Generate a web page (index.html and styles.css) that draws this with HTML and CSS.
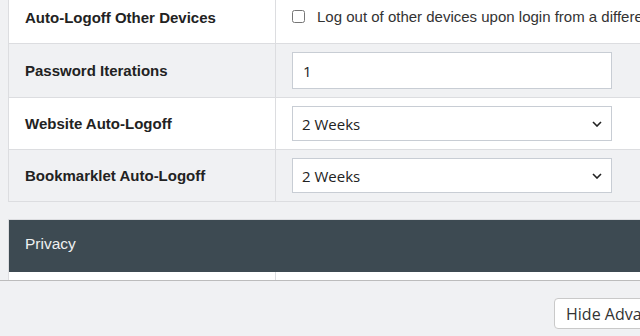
FILE: index.html
```html
<!DOCTYPE html>
<html lang="en">
<head>
    <meta charset="UTF-8">
    <meta name="viewport" content="width=device-width, initial-scale=1.0">
    <title>Advanced Settings</title>
    <link rel="stylesheet" href="styles.css">
</head>
<body>
    <div class="scroller">
        <table class="settings">
            <colgroup><col class="col-label"><col></colgroup>
            <tr>
                <th>Auto-Logoff Other Devices</th>
                <td>
                    <label class="check">
                        <input type="checkbox" id="logoutOthers">
                        <span>Log out of other devices upon login from a different device</span>
                    </label>
                </td>
            </tr>
            <tr class="alt">
                <th>Password Iterations</th>
                <td><input type="text" class="field" id="iterations" value="1" autofocus></td>
            </tr>
            <tr>
                <th>Website Auto-Logoff</th>
                <td>
                    <div class="select-wrap">
                        <select class="field" id="websiteLogoff">
                            <option>2 Weeks</option>
                        </select>
                        <svg class="chevron" width="10" height="6" viewBox="0 0 10 6"><path d="M1 1l4 4 4-4" fill="none" stroke="#222" stroke-width="1.6"/></svg>
                    </div>
                </td>
            </tr>
            <tr class="alt">
                <th>Bookmarklet Auto-Logoff</th>
                <td>
                    <div class="select-wrap">
                        <select class="field" id="bookmarkletLogoff">
                            <option>2 Weeks</option>
                        </select>
                        <svg class="chevron" width="10" height="6" viewBox="0 0 10 6"><path d="M1 1l4 4 4-4" fill="none" stroke="#222" stroke-width="1.6"/></svg>
                    </div>
                </td>
            </tr>
        </table>

        <table class="settings section">
            <colgroup><col class="col-label"><col></colgroup>
            <tr class="head">
                <th colspan="2">Privacy</th>
            </tr>
            <tr>
                <th></th>
                <td></td>
            </tr>
        </table>
    </div>

    <div class="footer">
        <button class="toggle">Hide Advanced Settings</button>
    </div>
</body>
</html>
```

FILE: styles.css
```css
html, body {
    margin: 0;
    padding: 0;
    background-color: #f0f1f3;
    overflow: hidden;
}
.scroller {
    height: 280px;
    overflow: hidden;
    border-bottom: 1px solid #bcbcbc;
    padding-left: 8px;
}
.settings {
    width: 720px;
    table-layout: fixed;
    margin-top: -8px;
    border-collapse: collapse;
    border-left: 1px solid #dcdde0;
    font-family: "Liberation Sans", Arial, sans-serif;
    font-size: 15px;
    color: #222;
}
.col-label {
    width: 267px;
}
.settings th,
.settings td {
    height: 35px;
    padding: 8px 16px;
    border-bottom: 1px solid #dcdde0;
    background-color: #fff;
    text-align: left;
    vertical-align: middle;
}
.settings th {
    font-weight: bold;
    border-right: 1px solid #dcdde0;
}
.settings tr.alt th,
.settings tr.alt td {
    background-color: #f0f1f3;
}
.settings.section {
    margin-top: 17px;
    border-top: 1px solid #dcdde0;
}
.settings tr.head th {
    height: 36px;
    padding: 6px 16px 10px;
    background-color: #3d4a52;
    color: #eef0f1;
    font-size: 15.5px;
    font-weight: normal;
    border-right: none;
    border-bottom: none;
}
.check {
    display: flex;
    align-items: center;
    gap: 12px;
    white-space: nowrap;
    color: #333;
    margin-top: -2px;
}
.check input {
    margin: 0;
    width: 13px;
    height: 13px;
}
.field {
    display: block;
    box-sizing: border-box;
    width: 320px;
    height: 37px;
    padding: 0 10px;
    border: 1px solid #c8cdd4;
    border-radius: 0;
    background-color: #fff;
    font-family: "Open Sans", "Noto Sans", sans-serif;
    font-size: 15px;
    color: #222;
    caret-color: #000;
}
.field:focus {
    outline: none;
}
select.field {
    height: 35px;
    padding-left: 9px;
    appearance: none;
    -webkit-appearance: none;
}
.select-wrap {
    position: relative;
    width: 320px;
}
.chevron {
    position: absolute;
    right: 10px;
    top: 15px;
    pointer-events: none;
}
.footer {
    display: flex;
    padding: 17px 0 0 554px;
}
.toggle {
    flex-shrink: 0;
    height: 31px;
    padding: 0 11px;
    border: 1px solid #c9c9c9;
    border-radius: 4px;
    background-color: #fff;
    font-family: "Open Sans", "Noto Sans", sans-serif;
    font-size: 16px;
    color: #333;
    white-space: nowrap;
    cursor: pointer;
}
```
